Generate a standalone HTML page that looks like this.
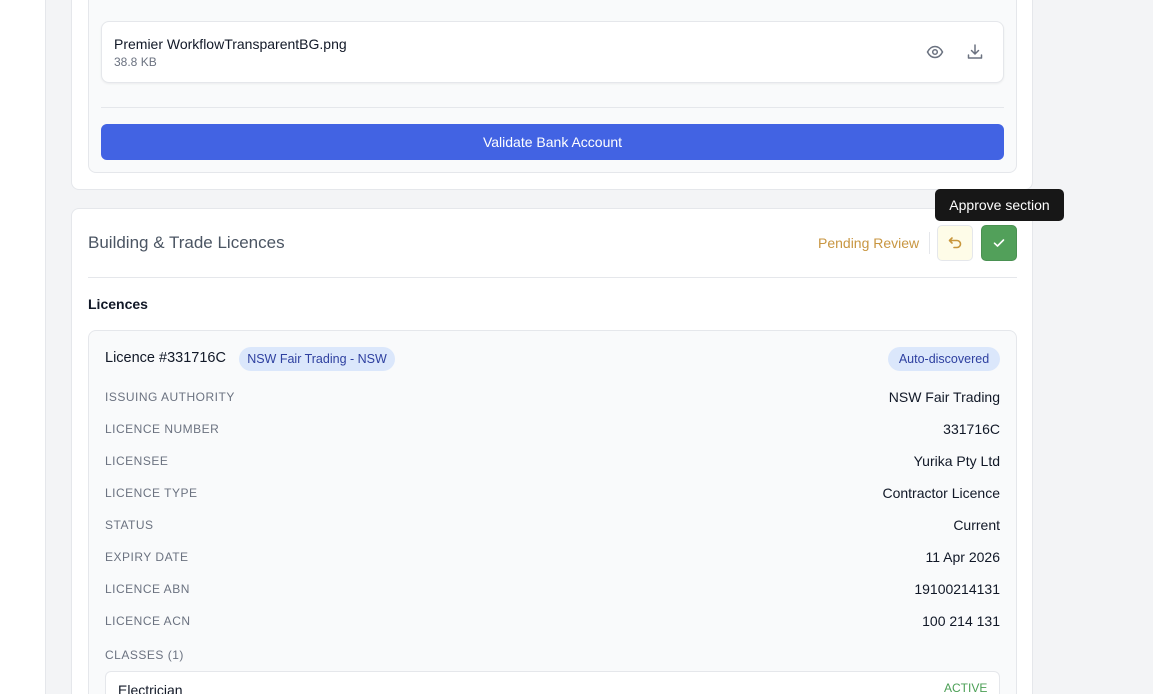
<!DOCTYPE html>
<html style="overflow:hidden;width:1153px;height:694px"><head><style>
*{box-sizing:border-box;margin:0;padding:0}
html,body{width:1153px;height:694px;overflow:hidden}
body{background:#fff;font-family:"Liberation Sans",sans-serif;position:relative;color:#111827}
.main{position:absolute;left:45px;top:0;width:1108px;height:694px;background:#f3f4f6;border-left:1px solid #e5e7eb}
.card{position:absolute;left:71px;width:962px;background:#fff;border:1px solid #e5e7eb;border-radius:8px}
.panel{position:absolute;left:88px;width:929px;background:#f9fafb;border:1px solid #e5e7eb;border-radius:8px}
.abs{position:absolute}
.lab{position:absolute;left:105px;font-size:12px;color:#6b7280;letter-spacing:.5px}
.val{position:absolute;right:153px;font-size:14px;color:#111827;text-align:right}
</style></head><body>
<div class="main"></div>
<div class="card" style="top:-20px;height:210px"></div>
<div class="panel" style="top:-20px;height:193px"></div>
<div class="abs" style="left:101px;top:21px;width:903px;height:62px;background:#fff;border:1px solid #e5e7eb;border-radius:8px;box-shadow:0 1px 2px rgba(0,0,0,.06)"></div>
<div class="abs" style="left:114px;top:36px;font-size:14px">Premier WorkflowTransparentBG.png</div>
<div class="abs" style="left:114px;top:55px;font-size:12px;color:#6b7280">38.8 KB</div>
<svg class="abs" style="left:926px;top:44px" width="18" height="16" viewBox="0 0 18 16" fill="none" stroke="#6b7280" stroke-width="1.5"><path d="M1.5 8C3.5 4 6 2.5 9 2.5S14.5 4 16.5 8C14.5 12 12 13.5 9 13.5S3.5 12 1.5 8Z"/><circle cx="9" cy="8" r="2.3"/></svg>
<svg class="abs" style="left:966px;top:43px" width="18" height="18" viewBox="0 0 18 18" fill="none" stroke="#6b7280" stroke-width="1.5" stroke-linecap="round" stroke-linejoin="round"><path d="M9 2v9M5.5 7.5 9 11l3.5-3.5M2.5 12v3h13v-3"/></svg>
<div class="abs" style="left:101px;top:107px;width:903px;height:1px;background:#e5e7eb"></div>
<div class="abs" style="left:101px;top:124px;width:903px;height:36px;background:#4263e3;border-radius:6px;color:#fff;font-size:14px;text-align:center;line-height:36px">Validate Bank Account</div>

<div class="card" style="top:208px;height:500px"></div>
<div class="abs" style="left:88px;top:233px;font-size:17px;color:#4b5563">Building &amp; Trade Licences</div>
<div class="abs" style="left:818px;top:235px;font-size:14px;color:#c89641">Pending Review</div>
<div class="abs" style="left:929px;top:232px;width:1px;height:22px;background:#e5e7eb"></div>
<div class="abs" style="left:937px;top:225px;width:36px;height:36px;background:#fefce8;border:1px solid #e5e7eb;border-radius:5px"></div>
<svg class="abs" style="left:947px;top:235px" width="16" height="16" viewBox="0 0 16 16" fill="none" stroke="#c8963b" stroke-width="1.6" stroke-linecap="round" stroke-linejoin="round"><path d="M5 3 2.5 5.5 5 8M2.5 5.5H10a3.5 3.5 0 0 1 0 7H7"/></svg>
<div class="abs" style="left:981px;top:225px;width:36px;height:36px;background:#52a05a;border:1px solid #4a9152;border-radius:5px"></div>
<svg class="abs" style="left:991px;top:235px" width="16" height="16" viewBox="0 0 16 16" fill="none" stroke="#fff" stroke-width="1.6" stroke-linecap="round" stroke-linejoin="round"><path d="M3.5 8.2 6.5 11l6-6"/></svg>
<div class="abs" style="left:935px;top:189px;width:129px;height:32px;background:#171717;border-radius:5px;color:#fff;font-size:14px;line-height:32px;text-align:center">Approve section</div>
<div class="abs" style="left:88px;top:277px;width:929px;height:1px;background:#e5e7eb"></div>
<div class="abs" style="left:88px;top:296px;font-size:14px;font-weight:bold">Licences</div>

<div class="panel" style="top:330px;height:380px"></div>
<div class="abs" style="left:105px;top:350px;font-size:14.5px">Licence #331716C</div>
<div class="abs" style="left:239px;top:347px;height:24px;width:156px;background:#dbe7fb;border-radius:12px;color:#2e40a0;font-size:12.5px;line-height:24px;text-align:center">NSW Fair Trading - NSW</div>
<div class="abs" style="left:888px;top:347px;height:24px;width:112px;background:#dbe7fb;border-radius:12px;color:#2e40a0;font-size:12.5px;line-height:24px;text-align:center">Auto-discovered</div>
<div class="lab" style="top:390px">ISSUING AUTHORITY</div><div class="val" style="top:389px">NSW Fair Trading</div>
<div class="lab" style="top:422px">LICENCE NUMBER</div><div class="val" style="top:421px">331716C</div>
<div class="lab" style="top:454px">LICENSEE</div><div class="val" style="top:453px">Yurika Pty Ltd</div>
<div class="lab" style="top:486px">LICENCE TYPE</div><div class="val" style="top:485px">Contractor Licence</div>
<div class="lab" style="top:518px">STATUS</div><div class="val" style="top:517px">Current</div>
<div class="lab" style="top:550px">EXPIRY DATE</div><div class="val" style="top:549px">11 Apr 2026</div>
<div class="lab" style="top:582px">LICENCE ABN</div><div class="val" style="top:581px">19100214131</div>
<div class="lab" style="top:614px">LICENCE ACN</div><div class="val" style="top:613px">100 214 131</div>
<div class="lab" style="top:648px">CLASSES (1)</div>
<div class="abs" style="left:105px;top:671px;width:895px;height:40px;background:#fff;border:1px solid #e5e7eb;border-radius:6px"></div>
<div class="abs" style="left:118px;top:682px;font-size:14px">Electrician</div>
<div class="abs" style="left:944px;top:681px;font-size:12px;color:#4b9f55">ACTIVE</div>
</body></html>
